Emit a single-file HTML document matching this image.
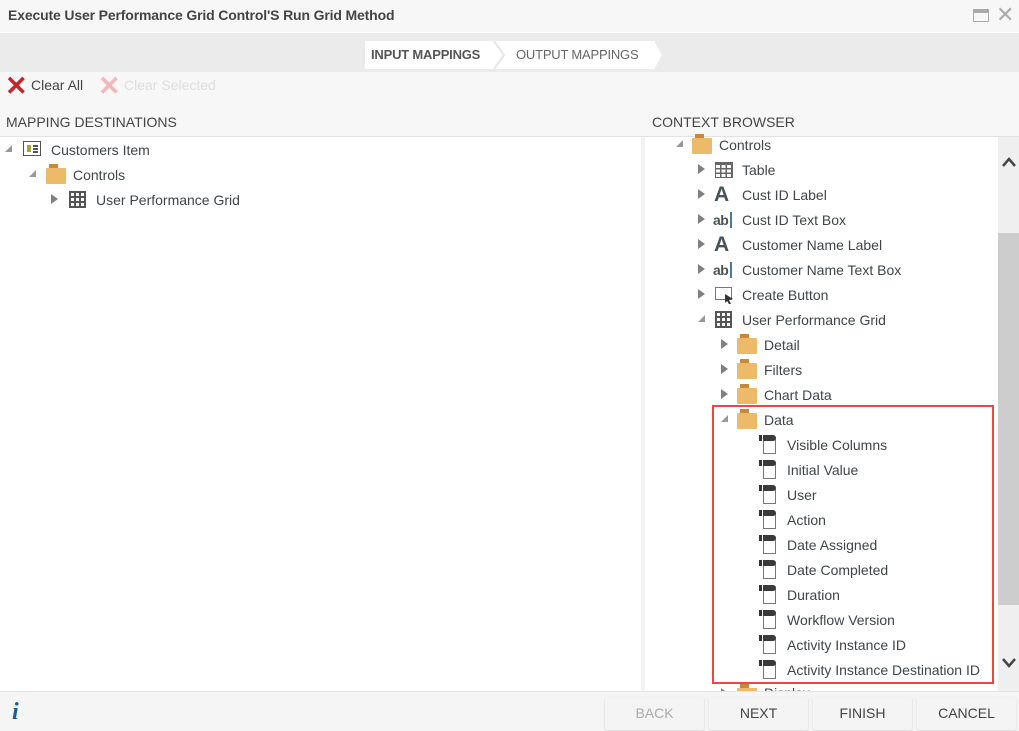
<!DOCTYPE html>
<html><head><style>
*{margin:0;padding:0;box-sizing:border-box}
body{width:1019px;height:731px;overflow:hidden;background:#fff;font-family:"Liberation Sans",sans-serif;color:#444;position:relative;font-size:14px}
.a{position:absolute;white-space:nowrap}
.t{position:absolute;line-height:18px;white-space:nowrap;color:#3f4548;font-size:14px}
.tri{position:absolute;width:0;height:0;border-top:5px solid transparent;border-bottom:5px solid transparent;border-left:7px solid #808080}
.dn{position:absolute;width:0;height:0;border-left:7px solid transparent;border-bottom:7px solid #999}
.fold{position:absolute;width:20px;height:16px;background:#ecba69;border-radius:1px}
.fold:before{content:"";position:absolute;left:3px;top:-4px;width:9px;height:4px;background:#c8883a}
.grid{position:absolute;width:17px;height:17px;background:
repeating-linear-gradient(90deg,#555 0 2px,transparent 2px 5px),
repeating-linear-gradient(0deg,#555 0 2px,transparent 2px 5px);}
.A{position:absolute;font-weight:bold;font-size:21px;color:#4b5356;line-height:20px}
.ab{position:absolute;font-weight:bold;font-size:14px;color:#4b5356;line-height:18px;letter-spacing:-0.5px}
.ab i{display:inline-block;width:2px;height:16px;background:#4a7a9a;vertical-align:-3px;margin-left:2px}
.fld{position:absolute;width:20px;height:20px}
.fld .p{position:absolute;left:4px;top:5px;width:13px;height:15px;border:1.5px solid #777;border-top:none;background:#fff}
.fld .h{position:absolute;left:0;top:1px;width:3px;height:6px;background:#333}
.fld .k{position:absolute;left:4px;top:1px;width:13px;height:6px;background:#3a3a3a;border-radius:0 4px 4px 0}
.btn{position:absolute;top:697px;width:99px;height:33px;background:#f4f4f4;border-radius:2px;box-shadow:0 1px 2px rgba(0,0,0,.15);text-align:center;line-height:33px;font-size:14px;color:#444}
</style></head><body>
<div class="a" style="left:0;top:0;width:1019px;height:32px;background:#f7f7f7"></div>
<div class="a" style="left:8px;top:7px;font-weight:bold;font-size:14px;color:#444;letter-spacing:-0.15px">Execute User Performance Grid Control'S Run Grid Method</div>
<div class="a" style="left:973px;top:9px;width:16px;height:13px;border:1.5px solid #aaa;border-top:4px solid #aaa"></div>
<div class="a" style="left:996px;top:3px;font-size:22px;color:#aaa;line-height:24px">✕</div>
<div class="a" style="left:0;top:33px;width:1019px;height:39px;background:#ebebeb"></div>
<div class="a" style="left:365px;top:41px;width:290px;height:28px;background:#fff"></div>
<div class="a" style="left:371px;top:47px;font-weight:bold;font-size:13px;color:#555;letter-spacing:-0.2px">INPUT MAPPINGS</div>
<svg class="a" style="left:490px;top:41px" width="16" height="28"><polyline points="4,0 14,14 4,28" fill="none" stroke="#e6e6e6" stroke-width="2"/></svg>
<div class="a" style="left:516px;top:47px;font-size:13px;color:#666;letter-spacing:-0.2px">OUTPUT MAPPINGS</div>
<svg class="a" style="left:648px;top:41px" width="16" height="28"><polygon points="0,0 6,0 14,14 6,28 0,28" fill="#fff"/></svg>
<div class="a" style="left:0;top:72px;width:1019px;height:64px;background:#f7f7f7"></div>
<div class="a" style="left:5px;top:73px;font-size:27px;font-weight:bold;color:#c8242c;line-height:27px">✕</div>
<div class="a" style="left:31px;top:77px;font-size:14px;color:#444">Clear All</div>
<div class="a" style="left:98px;top:73px;font-size:27px;font-weight:bold;color:#f2b8bb;line-height:27px">✕</div>
<div class="a" style="left:124px;top:77px;font-size:14px;color:#ddd">Clear Selected</div>
<div class="a" style="left:6px;top:114px;font-size:14px;color:#444">MAPPING DESTINATIONS</div>
<div class="a" style="left:652px;top:114px;font-size:14px;color:#444">CONTEXT BROWSER</div>
<div class="a" style="left:0;top:136px;width:1019px;height:1px;background:#e2e2e2"></div>
<div class="a" style="left:641px;top:137px;width:4px;height:555px;background:#f2f2f2"></div>
<div class="a" style="left:998px;top:137px;width:21px;height:555px;background:#efefef"></div>
<div class="a" style="left:998px;top:233px;width:21px;height:372px;background:#cdcdcd"></div>
<svg class="a" style="left:1001px;top:156px" width="16" height="12"><polyline points="2,10 8,3 14,10" fill="none" stroke="#444" stroke-width="2.5"/></svg>
<svg class="a" style="left:1001px;top:657px" width="16" height="12"><polyline points="2,2 8,9 14,2" fill="none" stroke="#444" stroke-width="2.5"/></svg>

<!-- left tree -->
<div class="dn" style="left:5px;top:145px"></div>
<div class="a" style="left:23px;top:141px;width:18px;height:15px;border:1.5px solid #555;background:#fff"></div>
<div class="a" style="left:27px;top:145px;width:4px;height:7px;background:#a5a820"></div>
<div class="a" style="left:33px;top:145px;width:5px;height:1.5px;background:#555;box-shadow:0 3px 0 #555,0 6px 0 #555"></div>
<div class="t" style="left:51px;top:141px">Customers Item</div>
<div class="dn" style="left:29px;top:170px"></div>
<div class="fold" style="left:46px;top:168px"></div>
<div class="t" style="left:73px;top:166px">Controls</div>
<div class="tri" style="left:51px;top:194px"></div>
<div class="grid" style="left:69px;top:191px"></div>
<div class="t" style="left:96px;top:191px">User Performance Grid</div>

<!-- right tree -->
<div class="dn" style="left:676px;top:140px"></div>
<div class="fold" style="left:692px;top:138px"></div>
<div class="t" style="left:719px;top:136px">Controls</div>

<div class="tri" style="left:698px;top:164px"></div>
<div class="a" style="left:715px;top:162px;width:18px;height:16px;border:1.5px solid #666;border-top:3px solid #666;background:repeating-linear-gradient(90deg,transparent 0 4px,#666 4px 5.5px),repeating-linear-gradient(0deg,transparent 0 3px,#666 3px 4.5px)"></div>
<div class="t" style="left:742px;top:161px">Table</div>

<div class="tri" style="left:698px;top:189px"></div>
<div class="A" style="left:714px;top:185px">A</div>
<div class="t" style="left:742px;top:186px">Cust ID Label</div>

<div class="tri" style="left:698px;top:214px"></div>
<div class="ab" style="left:713px;top:211px">ab<i></i></div>
<div class="t" style="left:742px;top:211px">Cust ID Text Box</div>

<div class="tri" style="left:698px;top:239px"></div>
<div class="A" style="left:714px;top:235px">A</div>
<div class="t" style="left:742px;top:236px">Customer Name Label</div>

<div class="tri" style="left:698px;top:264px"></div>
<div class="ab" style="left:713px;top:261px">ab<i></i></div>
<div class="t" style="left:742px;top:261px">Customer Name Text Box</div>

<div class="tri" style="left:698px;top:289px"></div>
<div class="a" style="left:715px;top:287px;width:17px;height:13px;border:1.5px solid #777"></div>
<svg class="a" style="left:724px;top:293px" width="10" height="12"><polygon points="1,1 9,6 5,7 7,11 5,11 3,8 1,10" fill="#333"/></svg>
<div class="t" style="left:742px;top:286px">Create Button</div>

<div class="dn" style="left:698px;top:315px"></div>
<div class="grid" style="left:715px;top:311px"></div>
<div class="t" style="left:742px;top:311px">User Performance Grid</div>

<div class="tri" style="left:721px;top:339px"></div>
<div class="fold" style="left:737px;top:338px"></div>
<div class="t" style="left:764px;top:336px">Detail</div>
<div class="tri" style="left:721px;top:364px"></div>
<div class="fold" style="left:737px;top:363px"></div>
<div class="t" style="left:764px;top:361px">Filters</div>
<div class="tri" style="left:721px;top:389px"></div>
<div class="fold" style="left:737px;top:388px"></div>
<div class="t" style="left:764px;top:386px">Chart Data</div>
<div class="dn" style="left:721px;top:415px"></div>
<div class="fold" style="left:737px;top:413px"></div>
<div class="t" style="left:764px;top:411px">Data</div>

<div class="fld" style="left:759px;top:434px"><div class="p"></div><div class="h"></div><div class="k"></div></div><div class="t" style="left:787px;top:436px">Visible Columns</div>
<div class="fld" style="left:759px;top:459px"><div class="p"></div><div class="h"></div><div class="k"></div></div><div class="t" style="left:787px;top:461px">Initial Value</div>
<div class="fld" style="left:759px;top:484px"><div class="p"></div><div class="h"></div><div class="k"></div></div><div class="t" style="left:787px;top:486px">User</div>
<div class="fld" style="left:759px;top:509px"><div class="p"></div><div class="h"></div><div class="k"></div></div><div class="t" style="left:787px;top:511px">Action</div>
<div class="fld" style="left:759px;top:534px"><div class="p"></div><div class="h"></div><div class="k"></div></div><div class="t" style="left:787px;top:536px">Date Assigned</div>
<div class="fld" style="left:759px;top:559px"><div class="p"></div><div class="h"></div><div class="k"></div></div><div class="t" style="left:787px;top:561px">Date Completed</div>
<div class="fld" style="left:759px;top:584px"><div class="p"></div><div class="h"></div><div class="k"></div></div><div class="t" style="left:787px;top:586px">Duration</div>
<div class="fld" style="left:759px;top:609px"><div class="p"></div><div class="h"></div><div class="k"></div></div><div class="t" style="left:787px;top:611px">Workflow Version</div>
<div class="fld" style="left:759px;top:634px"><div class="p"></div><div class="h"></div><div class="k"></div></div><div class="t" style="left:787px;top:636px">Activity Instance ID</div>
<div class="fld" style="left:759px;top:659px"><div class="p"></div><div class="h"></div><div class="k"></div></div><div class="t" style="left:787px;top:661px">Activity Instance Destination ID</div>

<div class="tri" style="left:721px;top:688px"></div>
<div class="fold" style="left:737px;top:688px"></div>
<div class="t" style="left:764px;top:684px">Display</div>

<div class="a" style="left:712px;top:405px;width:282px;height:279px;border:2px solid #f0444a"></div>

<!-- footer -->
<div class="a" style="left:0;top:691px;width:1019px;height:40px;background:#f5f5f5;border-top:1px solid #e4e4e4"></div>
<div class="a" style="left:12px;top:700px;font-family:'Liberation Serif',serif;font-style:italic;font-weight:bold;font-size:24px;color:#1e5e98;line-height:24px">i</div>
<div class="btn" style="left:605px;color:#aaa">BACK</div>
<div class="btn" style="left:709px">NEXT</div>
<div class="btn" style="left:813px">FINISH</div>
<div class="btn" style="left:917px">CANCEL</div>
</body></html>
